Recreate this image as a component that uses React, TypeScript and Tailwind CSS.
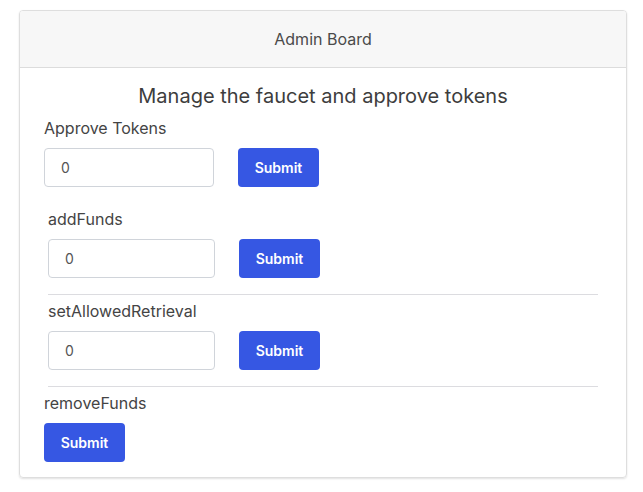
function Field({ label, indent }: { label: string; indent?: boolean }) {
  return (
    <div className={indent ? 'pl-1' : ''}>
      <p className="h-6 text-base leading-6 text-[#444]">{label}</p>
      <div className="mt-2 flex items-center gap-6">
        <input
          defaultValue="0"
          className="h-[39px] w-[167px] rounded-[4px] border border-[#d0d4da] bg-white px-4 text-sm text-[#555] outline-none"
        />
        <button className="h-[39px] w-[81px] rounded-[4px] bg-[#3657e3] text-sm font-semibold text-white">Submit</button>
      </div>
    </div>
  );
}

export default function App() {
  return (
    <div className="min-h-screen bg-white pt-[10px] pl-[19px] font-['Inter',sans-serif]">
      <div className="w-[608px] overflow-hidden rounded-[4px] border border-[#dedede] shadow-[0_1px_2px_rgba(0,0,0,0.12)]">
        <div className="flex h-[57px] items-center justify-center border-b border-[#dcdcdc] bg-[#f7f7f7] text-base text-[#4a4a4a]">
          Admin Board
        </div>
        <div className="px-6 pt-[14px] pb-[15px]">
          <h1 className="text-center text-xl leading-7 text-[#3d3d3d]">Manage the faucet and approve tokens</h1>
          <div className="mt-[6px]">
            <p className="h-6 text-base leading-6 text-[#444]">Approve Tokens</p>
            <div className="mt-2 flex items-center gap-6">
              <input
                defaultValue="0"
                className="h-[39px] w-[170px] rounded-[4px] border border-[#d0d4da] bg-white px-4 text-sm text-[#555] outline-none"
              />
              <button className="h-[39px] w-[81px] rounded-[4px] bg-[#3657e3] text-sm font-semibold text-white">Submit</button>
            </div>
          </div>
          <div className="mt-5">
            <Field label="addFunds" indent />
          </div>
          <div className="mx-1 mt-4 border-t border-[#dcdce0]"></div>
          <div className="mt-[4px]">
            <Field label="setAllowedRetrieval" indent />
          </div>
          <div className="mx-1 mt-4 border-t border-[#dcdce0]"></div>
          <div className="mt-[4px]">
            <p className="h-6 text-base leading-6 text-[#444]">removeFunds</p>
            <button className="mt-2 h-[39px] w-[81px] rounded-[4px] bg-[#3657e3] text-sm font-semibold text-white">Submit</button>
          </div>
        </div>
      </div>
    </div>
  );
}
